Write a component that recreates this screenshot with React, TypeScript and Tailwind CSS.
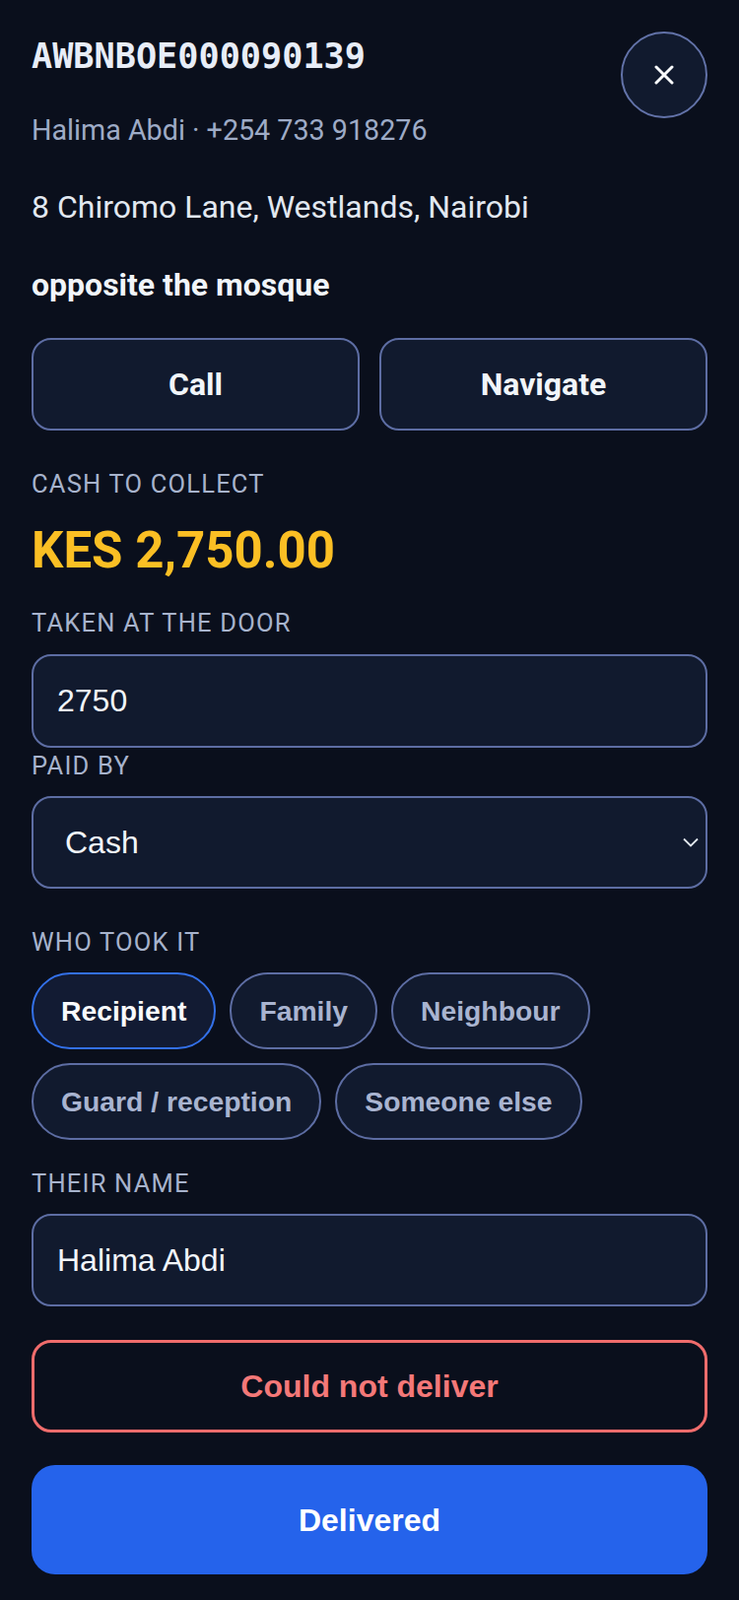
import { useState } from "react";

const FIELD =
  "w-full h-[94px] rounded-[20px] border-2 border-[#5d6da3] bg-[#111a2e] text-[32px] text-[#f1f5f9] font-['Liberation_Sans',Arial,sans-serif] outline-none";

const LABEL = "text-[25.5px] leading-none uppercase tracking-[1.2px] text-[#a7b3cc]";

const takers = ["Recipient", "Family", "Neighbour", "Guard / reception", "Someone else"];

export default function App() {
  const [taker, setTaker] = useState("Recipient");

  return (
    <div className="min-h-screen bg-[#0a0f1c] px-8 pt-8 pb-6 font-['Roboto','Liberation_Sans',sans-serif]">
      <div className="flex items-start justify-between">
        <div className="min-w-0 flex-1">
          <h1 className="mt-[7px] font-['DejaVu_Sans_Mono','Liberation_Mono',monospace] text-[35.2px] font-bold leading-none text-[#e8edf7]">
            AWBNBOE000090139
          </h1>
          <p className="mt-[44px] text-[28.7px] leading-none text-[#9eabc6]">
            Halima Abdi · +254 733 918276
          </p>
          <p className="mt-[47px] text-[32px] leading-none text-[#e2e8f0]">
            8 Chiromo Lane, Westlands, Nairobi
          </p>
          <p className="mt-[47px] text-[32px] font-bold leading-none text-[#f1f5f9]">
            opposite the mosque
          </p>
        </div>
        <button
          aria-label="Close"
          className="flex h-[88px] w-[88px] shrink-0 items-center justify-center rounded-full border-2 border-[#6272a8] bg-[#111a2e]"
        >
          <svg width="20" height="20" viewBox="0 0 20 20" fill="none">
            <path d="M2 2l16 16M18 2L2 18" stroke="#f8fafc" strokeWidth="3" strokeLinecap="round" />
          </svg>
        </button>
      </div>

      <div className="mt-[38px] grid grid-cols-2 gap-5">
        <a
          href="#"
          className="flex h-[94px] items-center justify-center rounded-[20px] border-2 border-[#5d6da3] bg-[#111a2e] text-[32px] font-bold text-[#f1f5f9]"
        >
          Call
        </a>
        <a
          href="#"
          className="flex h-[94px] items-center justify-center rounded-[20px] border-2 border-[#5d6da3] bg-[#111a2e] text-[32px] font-bold text-[#f1f5f9]"
        >
          Navigate
        </a>
      </div>

      <div className={`mt-[42px] ${LABEL}`}>Cash to collect</div>
      <div className="mt-[29px] text-[51px] font-bold leading-none text-[#fbbf24]">KES 2,750.00</div>

      <div className={`mt-[36px] ${LABEL}`}>Taken at the door</div>
      <input defaultValue="2750" inputMode="decimal" className={`mt-[18px] h-[95px] px-6 ${FIELD}`} />

      <div className={`mt-[6px] ${LABEL}`}>Paid by</div>
      <div className="relative mt-[18px]">
        <select defaultValue="Cash" className={`appearance-none pl-[32px] pr-12 ${FIELD}`}>
          <option>Cash</option>
          <option>M-Pesa</option>
          <option>Card</option>
        </select>
        <svg
          className="pointer-events-none absolute right-[9px] top-1/2 -translate-y-1/2"
          width="16"
          height="10"
          viewBox="0 0 16 10"
          fill="none"
        >
          <path d="M1 1.5l7 7 7-7" stroke="#e2e8f0" strokeWidth="1.8" />
        </svg>
      </div>

      <div className={`mt-[42px] ${LABEL}`}>Who took it</div>
      <div className="mt-[17px] flex flex-wrap gap-[14px]">
        {takers.map((t) => (
          <button
            key={t}
            onClick={() => setTaker(t)}
            className={`h-[78px] rounded-full border-2 px-[28px] font-['Liberation_Sans',Arial,sans-serif] text-[28.3px] font-bold ${
              taker === t
                ? "border-[#3370e8] bg-[#121b33] text-[#f8fafc]"
                : "border-[#5d6da3] bg-[#111a2e] text-[#a9b4d0]"
            }`}
          >
            {t}
          </button>
        ))}
      </div>

      <div className={`mt-[32px] ${LABEL}`}>Their name</div>
      <input defaultValue="Halima Abdi" className={`mt-[18px] px-6 ${FIELD}`} />

      <button className="mt-[34px] h-[94px] w-full rounded-[20px] border-[3px] border-[#f06c6c] font-['Liberation_Sans',Arial,sans-serif] text-[32px] font-bold text-[#f47878]">
        Could not deliver
      </button>
      <button className="mt-[33px] h-[111px] w-full rounded-[24px] bg-[#2563eb] font-['Liberation_Sans',Arial,sans-serif] text-[32px] font-bold text-white">
        Delivered
      </button>
    </div>
  );
}
